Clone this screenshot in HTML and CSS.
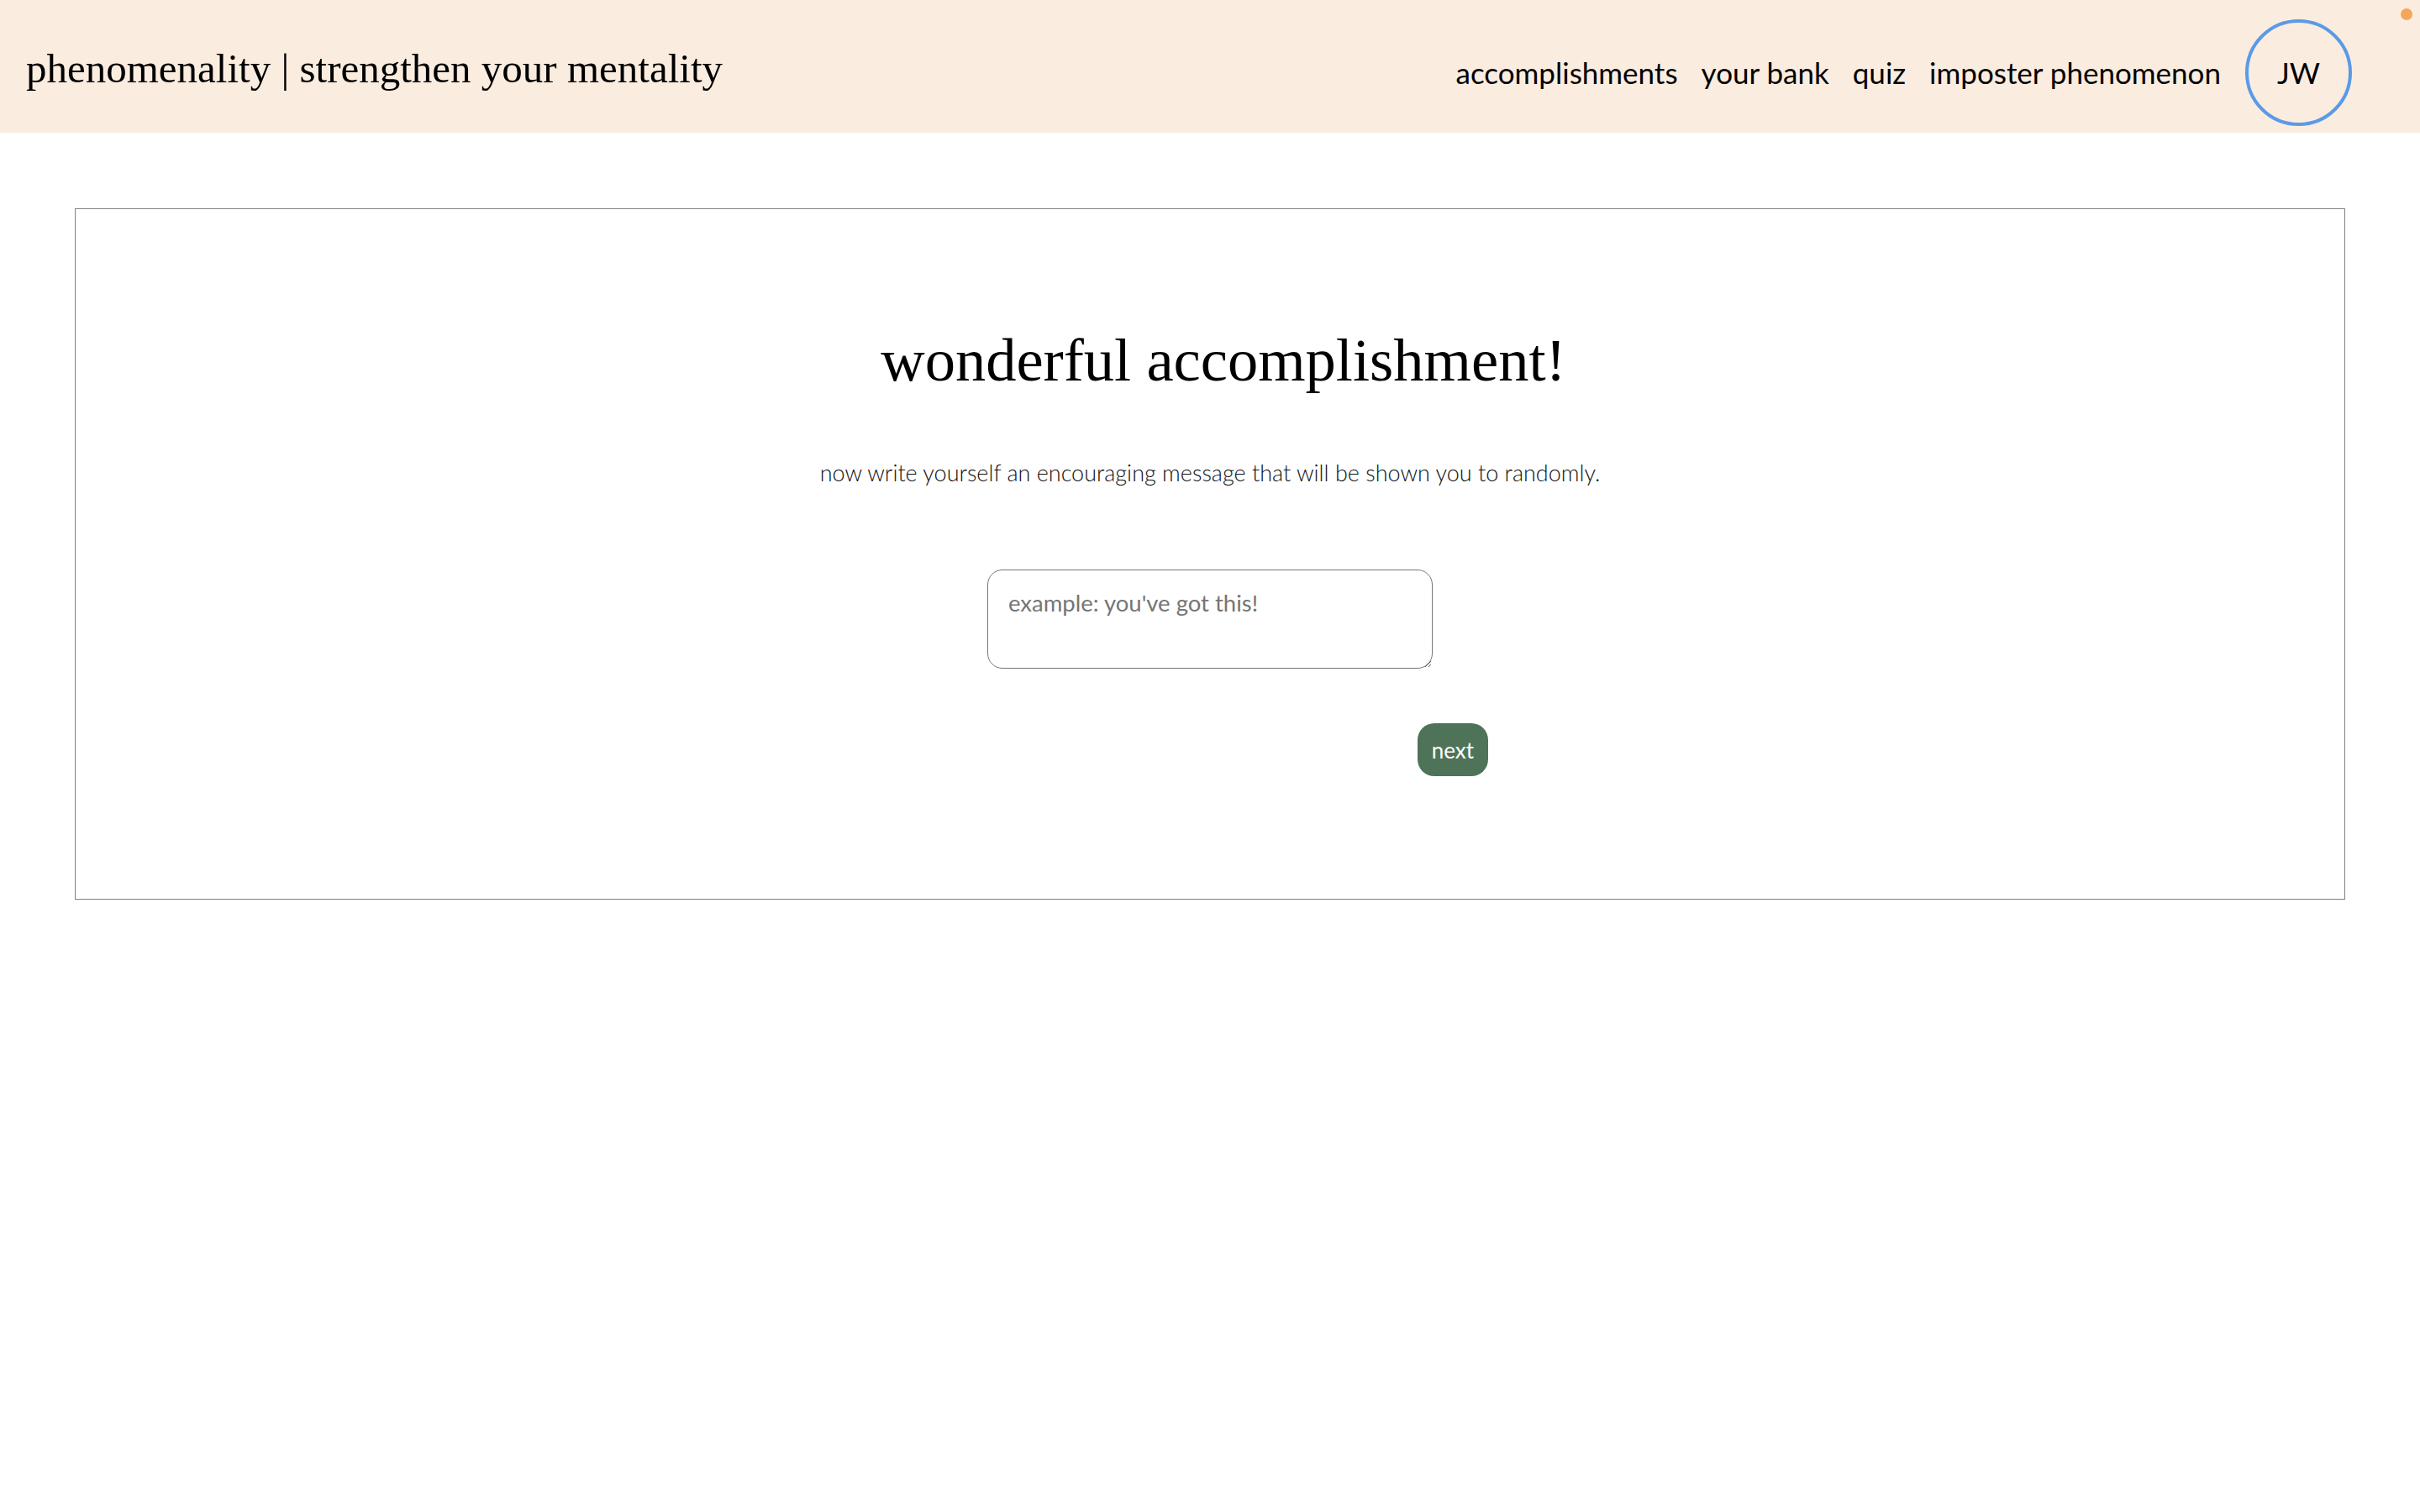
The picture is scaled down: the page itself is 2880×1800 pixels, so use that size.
FILE: index.html
```html
<!DOCTYPE html>
<html lang="en">
<head>
<meta charset="utf-8">
<title>phenomenality</title>
<link rel="stylesheet" href="styles.css">
</head>
<body>
<header class="topbar">
  <div class="brand">phenomenality | strengthen your mentality</div>
  <nav class="nav">
    <a class="nav-link" href="#">accomplishments</a>
    <a class="nav-link" href="#">your bank</a>
    <a class="nav-link" href="#">quiz</a>
    <a class="nav-link" href="#">imposter phenomenon</a>
    <div class="avatar">JW</div>
  </nav>
  <span class="dot"></span>
</header>
<main class="card">
  <h1 class="title">wonderful accomplishment!</h1>
  <p class="lead">now write yourself an encouraging message that will be shown you to randomly.</p>
  <textarea class="message" placeholder="example: you've got this!"></textarea>
  <div class="actions">
    <button class="next" type="button">next</button>
  </div>
</main>
</body>
</html>
```
FILE: styles.css
```css
* { box-sizing: border-box; }
html, body { margin: 0; padding: 0; background: #ffffff; }
body { font-family: "Lato", "Liberation Sans", sans-serif; color: #000; }

.topbar {
  position: relative;
  height: 158px;
  background: #faede0;
  display: flex;
  align-items: center;
  justify-content: space-between;
  padding: 0 81px 0 31px;
}
.brand {
  font-family: "Liberation Serif", serif;
  font-size: 49px;
  line-height: 1;
  margin-top: 4px;
  color: #000;
}
.nav {
  display: flex;
  align-items: center;
  gap: 28px;
  margin-top: 15px;
}
.nav-link {
  font-size: 35px;
  line-height: 1;
  color: #000;
  text-decoration: none;
}
.avatar {
  width: 127px;
  height: 127px;
  margin-left: 1px;
  border: 4px solid #5b9ae6;
  border-radius: 50%;
  display: flex;
  align-items: center;
  justify-content: center;
  font-size: 35px;
  line-height: 1;
}
.dot {
  position: absolute;
  top: 10px;
  right: 9px;
  width: 14px;
  height: 14px;
  border-radius: 50%;
  background: #f4a65b;
}

.card {
  margin: 90px 89px 0;
  border: 1px solid #808080;
  padding: 138px 0 146px;
  display: flex;
  flex-direction: column;
  align-items: center;
}
.title {
  margin: 0;
  padding-left: 32px;
  font-family: "Liberation Serif", serif;
  font-weight: normal;
  font-size: 72.5px;
  line-height: 84px;
}
.lead {
  margin: 75px 0 0;
  font-weight: 300;
  font-size: 27px;
  line-height: 34px;
  color: #111;
}
.message {
  margin-top: 98px;
  width: 530px;
  height: 118px;
  border: 1px solid #767676;
  border-radius: 18px;
  padding: 22px 24px 10px;
  font-family: "Lato", "Liberation Sans", sans-serif;
  font-size: 27.5px;
  line-height: 34px;
  color: #000;
}
.message::placeholder { color: #757575; }
.actions {
  width: 662px;
  margin-top: 65px;
  display: flex;
  justify-content: flex-end;
}
.next {
  height: 63px;
  padding: 0 17px;
  border: none;
  border-radius: 20px;
  background: #4f7358;
  color: #fff;
  font-family: "Lato", "Liberation Sans", sans-serif;
  font-size: 26px;
}
```
